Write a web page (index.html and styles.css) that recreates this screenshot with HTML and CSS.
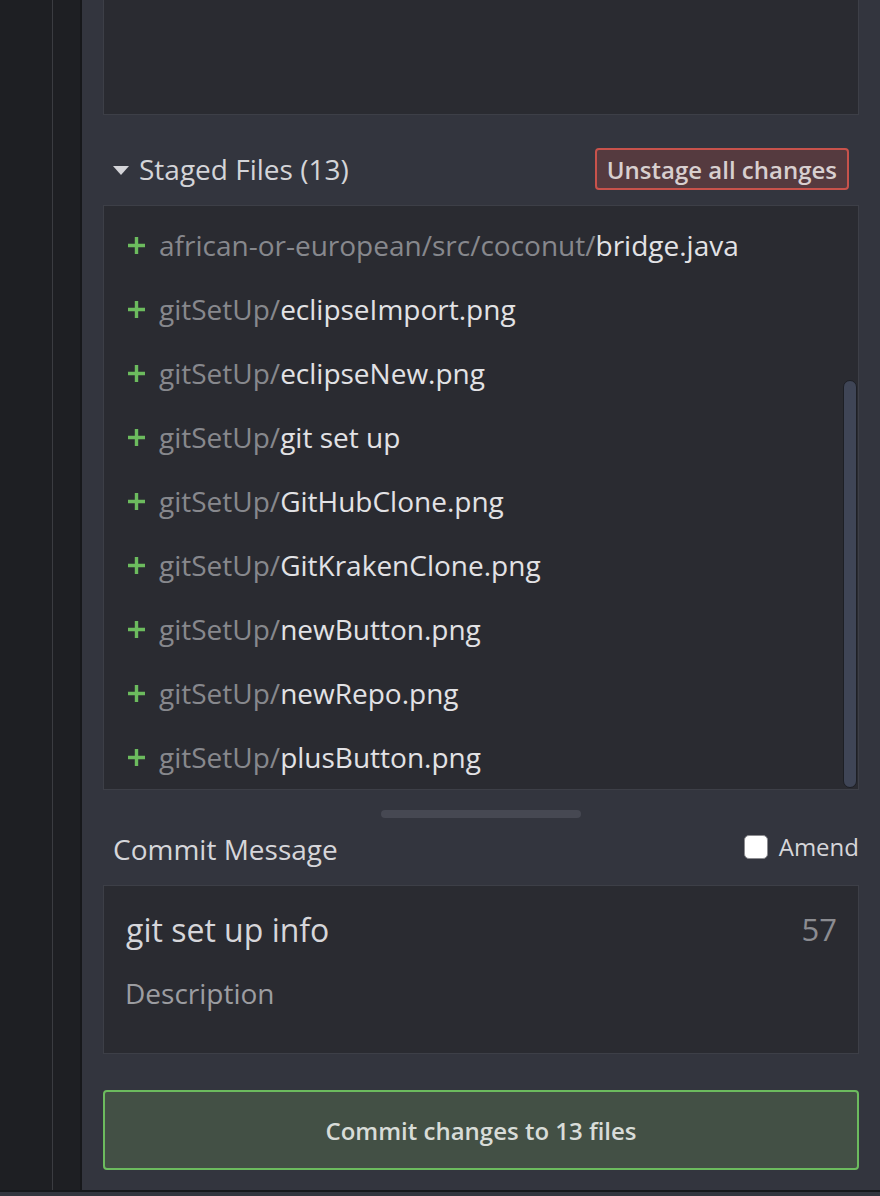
FILE: index.html
```html
<!DOCTYPE html>
<html>
<head>
<meta charset="utf-8">
<link rel="stylesheet" href="styles.css">
</head>
<body>
<div class="app">
  <div class="rail rail-a"></div>
  <div class="rail-line"></div>
  <div class="rail rail-b"></div>
  <div class="panel">
    <div class="top-box"></div>
    <div class="section-head">
      <div class="section-title">
        <span class="caret"></span>
        <span>Staged Files (13)</span>
      </div>
      <button class="unstage">Unstage all changes</button>
    </div>
    <div class="file-list">
      <div class="rows">
        <div class="row"><span class="plus"><svg width="19" height="19" viewBox="0 0 19 19"><path d="M9.5 1v17M1 9.5h17" stroke="#6cbb5e" stroke-width="3.4"/></svg></span><span class="dir">african-or-european/src/coconut/</span><span class="name">bridge.java</span></div>
        <div class="row"><span class="plus"><svg width="19" height="19" viewBox="0 0 19 19"><path d="M9.5 1v17M1 9.5h17" stroke="#6cbb5e" stroke-width="3.4"/></svg></span><span class="dir">gitSetUp/</span><span class="name">eclipseImport.png</span></div>
        <div class="row"><span class="plus"><svg width="19" height="19" viewBox="0 0 19 19"><path d="M9.5 1v17M1 9.5h17" stroke="#6cbb5e" stroke-width="3.4"/></svg></span><span class="dir">gitSetUp/</span><span class="name">eclipseNew.png</span></div>
        <div class="row"><span class="plus"><svg width="19" height="19" viewBox="0 0 19 19"><path d="M9.5 1v17M1 9.5h17" stroke="#6cbb5e" stroke-width="3.4"/></svg></span><span class="dir">gitSetUp/</span><span class="name">git set up</span></div>
        <div class="row"><span class="plus"><svg width="19" height="19" viewBox="0 0 19 19"><path d="M9.5 1v17M1 9.5h17" stroke="#6cbb5e" stroke-width="3.4"/></svg></span><span class="dir">gitSetUp/</span><span class="name">GitHubClone.png</span></div>
        <div class="row"><span class="plus"><svg width="19" height="19" viewBox="0 0 19 19"><path d="M9.5 1v17M1 9.5h17" stroke="#6cbb5e" stroke-width="3.4"/></svg></span><span class="dir">gitSetUp/</span><span class="name">GitKrakenClone.png</span></div>
        <div class="row"><span class="plus"><svg width="19" height="19" viewBox="0 0 19 19"><path d="M9.5 1v17M1 9.5h17" stroke="#6cbb5e" stroke-width="3.4"/></svg></span><span class="dir">gitSetUp/</span><span class="name">newButton.png</span></div>
        <div class="row"><span class="plus"><svg width="19" height="19" viewBox="0 0 19 19"><path d="M9.5 1v17M1 9.5h17" stroke="#6cbb5e" stroke-width="3.4"/></svg></span><span class="dir">gitSetUp/</span><span class="name">newRepo.png</span></div>
        <div class="row"><span class="plus"><svg width="19" height="19" viewBox="0 0 19 19"><path d="M9.5 1v17M1 9.5h17" stroke="#6cbb5e" stroke-width="3.4"/></svg></span><span class="dir">gitSetUp/</span><span class="name">plusButton.png</span></div>
      </div>
      <div class="scrollbar"></div>
    </div>
    <div class="resize"><div class="grip"></div></div>
    <div class="msg-head">
      <span class="msg-label">Commit Message</span>
      <label class="amend"><span class="check"></span><span>Amend</span></label>
    </div>
    <div class="msg-box">
      <div class="summary-line">
        <span class="summary">git set up info</span>
        <span class="count">57</span>
      </div>
      <div class="description">Description</div>
    </div>
    <button class="commit">Commit changes to 13 files</button>
  </div>
</div>
<div class="footer"></div>
</body>
</html>
```

FILE: styles.css
```css
html, body {
  margin: 0;
  padding: 0;
}
body {
  width: 880px;
  height: 1196px;
  overflow: hidden;
  background: #33353e;
  font-family: "Open Sans", "Noto Sans", sans-serif;
  display: flex;
  flex-direction: column;
}
.app {
  display: flex;
  height: 1190px;
}
.rail {
  background: #1e1f23;
}
.rail-a {
  width: 52px;
}
.rail-line {
  width: 1px;
  background: #3b3c41;
}
.rail-b {
  width: 27px;
  border-right: 2px solid #17181b;
}
.panel {
  flex: 1;
  background: #33353e;
  padding: 0 21px;
  display: flex;
  flex-direction: column;
}
.top-box {
  height: 114px;
  background: #2a2b31;
  border: 1px solid #3d3f47;
  border-top: none;
}
.section-head {
  box-sizing: border-box;
  height: 90px;
  padding: 18px 10px 0 10px;
  display: flex;
  align-items: center;
  justify-content: space-between;
}
.section-title {
  display: flex;
  align-items: center;
  gap: 10px;
  color: #d4d4d8;
  font-size: 28px;
}
.caret {
  width: 0;
  height: 0;
  border-left: 8.5px solid transparent;
  border-right: 8.5px solid transparent;
  border-top: 9px solid #d4d4d8;
  margin-top: 2px;
}
.unstage {
  box-sizing: border-box;
  height: 42px;
  padding: 0 10px;
  background: #553a3f;
  border: 2px solid #c8524b;
  border-radius: 4px;
  color: #d8cfcf;
  font-family: "Open Sans", "Noto Sans", sans-serif;
  font-weight: 600;
  font-size: 24px;
}
.file-list {
  position: relative;
  height: 583px;
  background: #2a2b31;
  border: 1px solid #3d3f47;
  overflow: hidden;
}
.rows {
  padding-top: 7px;
}
.row {
  height: 64px;
  display: flex;
  align-items: center;
  padding-left: 23px;
  font-size: 28px;
  white-space: nowrap;
}
.plus {
  display: flex;
  width: 19px;
  height: 19px;
  margin-right: 13px;
}
.dir {
  color: #87888d;
}
.name {
  color: #e2e2e5;
}
.scrollbar {
  position: absolute;
  right: 1px;
  top: 174px;
  bottom: 1px;
  width: 12px;
  background: #3f4556;
  border: 1px solid #1d1f25;
  border-radius: 8px;
}
.resize {
  padding-top: 20px;
  display: flex;
  justify-content: center;
}
.grip {
  width: 200px;
  height: 8px;
  border-radius: 4px;
  background: #464852;
}
.msg-head {
  box-sizing: border-box;
  height: 67px;
  padding: 0 0 5px 10px;
  display: flex;
  align-items: center;
  justify-content: space-between;
}
.msg-label {
  color: #d6d6da;
  font-size: 28px;
}
.amend {
  display: flex;
  align-items: center;
  gap: 11px;
  color: #d6d6da;
  font-size: 24px;
  margin-bottom: 5px;
}
.check {
  box-sizing: border-box;
  width: 24px;
  height: 24px;
  background: #ffffff;
  border: 1px solid #8c8c90;
  border-radius: 5px;
}
.msg-box {
  box-sizing: border-box;
  height: 169px;
  background: #2a2b31;
  border: 1px solid #3d3f47;
  padding: 20px 21px 0 21px;
}
.summary-line {
  display: flex;
  justify-content: space-between;
  align-items: center;
  height: 46px;
  padding-left: 1px;
}
.summary {
  color: #d6d6da;
  font-size: 32px;
}
.count {
  color: #8b8c91;
  font-size: 31px;
}
.description {
  margin-top: 22px;
  color: #9c9da1;
  font-size: 28px;
  line-height: 38px;
}
.commit {
  box-sizing: border-box;
  margin-top: 36px;
  height: 80px;
  background: #435045;
  border: 2px solid #6cbb5e;
  border-radius: 4px;
  color: #d8dcd8;
  font-family: "Open Sans", "Noto Sans", sans-serif;
  font-weight: 600;
  font-size: 24px;
}
.footer {
  height: 4px;
  border-top: 2px solid #17181b;
  background: #33353e;
}
```
